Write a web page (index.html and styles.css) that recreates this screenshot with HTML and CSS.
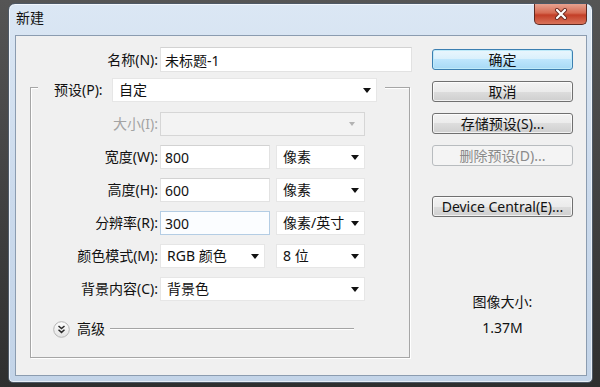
FILE: index.html
```html
<!DOCTYPE html>
<html lang="zh-CN">
<head>
    <meta charset="UTF-8">
    <title>新建</title>
    <link rel="stylesheet" href="styles.css">
</head>
<body>
<div class="window">
    <div class="titlebar">
        <span class="title">新建</span>
        <div class="close">
            <svg width="14" height="12" viewBox="0 0 14 12">
                <path d="M3 2 L11 10 M11 2 L3 10" stroke="#6b2b22" stroke-width="4" stroke-linecap="round"/>
                <path d="M3 2 L11 10 M11 2 L3 10" stroke="#fff" stroke-width="2.2" stroke-linecap="round"/>
            </svg>
        </div>
    </div>
    <div class="client">
        <div class="main">
            <div class="name-row">
                <label>名称(N):</label>
                <input class="field name-field" type="text" value="未标题-1">
            </div>
            <fieldset class="group">
                <legend>
                    <div class="preset">
                        <label>预设(P):</label>
                        <div class="select preset-select">自定<span class="arrow"></span></div>
                    </div>
                </legend>
                <div class="row disabled">
                    <label>大小(I):</label>
                    <div class="select select-off w-size"><span></span><span class="arrow"></span></div>
                </div>
                <div class="row">
                    <label>宽度(W):</label>
                    <input class="field w-num" type="text" value="800">
                    <div class="select w-unit">像素<span class="arrow"></span></div>
                </div>
                <div class="row">
                    <label>高度(H):</label>
                    <input class="field w-num" type="text" value="600">
                    <div class="select w-unit">像素<span class="arrow"></span></div>
                </div>
                <div class="row">
                    <label>分辨率(R):</label>
                    <input class="field w-num focus" type="text" value="300">
                    <div class="select w-unit">像素/英寸<span class="arrow"></span></div>
                </div>
                <div class="row">
                    <label>颜色模式(M):</label>
                    <div class="select w-mode">RGB 颜色<span class="arrow"></span></div>
                    <div class="select w-unit w-bits">8 位<span class="arrow"></span></div>
                </div>
                <div class="row">
                    <label>背景内容(C):</label>
                    <div class="select w-size">背景色<span class="arrow"></span></div>
                </div>
                <div class="advanced">
                    <svg class="chevron" width="17" height="17" viewBox="0 0 17 17">
                        <defs>
                            <linearGradient id="cg" x1="0" y1="0" x2="0" y2="1">
                                <stop offset="0" stop-color="#fdfdfd"/>
                                <stop offset="1" stop-color="#e2e2e2"/>
                            </linearGradient>
                        </defs>
                        <circle cx="8.5" cy="8.5" r="7.8" fill="url(#cg)" stroke="#b5b5b5"/>
                        <path d="M5.5 5 L8.5 7.6 L11.5 5 M5.5 8.8 L8.5 11.4 L11.5 8.8" fill="none" stroke="#2a2a2a" stroke-width="1.5"/>
                    </svg>
                    <span class="adv-text">高级</span>
                    <span class="adv-line"></span>
                </div>
            </fieldset>
        </div>
        <div class="side">
            <button class="btn btn-default">确定</button>
            <button class="btn">取消</button>
            <button class="btn">存储预设(S)...</button>
            <button class="btn" disabled>删除预设(D)...</button>
            <button class="btn btn-device">Device Central(E)...</button>
            <div class="info">
                <div>图像大小:</div>
                <div class="info-size">1.37M</div>
            </div>
        </div>
    </div>
</div>
</body>
</html>
```

FILE: styles.css
```css
body {
    margin: 0;
    width: 600px;
    height: 387px;
    overflow: hidden;
    background: linear-gradient(#555555, #2f2f2f);
    font-family: "Noto Sans", "Noto Sans CJK SC", sans-serif;
    font-size: 14px;
    color: #111;
}
.window {
    box-sizing: border-box;
    width: 585px;
    height: 380px;
    margin: 3px 0 0 8px;
    padding: 0 5px 6px 6px;
    border: 1px solid #4e5966;
    border-radius: 7px 7px 5px 5px;
    background: linear-gradient(#dbe7f4, #cbdaec 50%, #c3d4e8);
    box-shadow: inset 0 0 0 1px rgba(255, 255, 255, 0.6);
}
.titlebar {
    display: flex;
    height: 31px;
}
.title {
    margin: 6px 0 0 1px;
    line-height: 16px;
}
.close {
    box-sizing: border-box;
    display: flex;
    align-items: center;
    justify-content: center;
    width: 53px;
    height: 21px;
    margin-left: auto;
    border: 1px solid #5e2a22;
    border-top: none;
    border-radius: 0 0 5px 5px;
    background: linear-gradient(#e6a290 0%, #d66a52 45%, #c33e27 55%, #d9735a 100%);
}
.client {
    box-sizing: border-box;
    display: flex;
    height: 341px;
    padding-left: 14px;
    border: 1px solid #8b9cb0;
    background: #f0f0f0;
}
.main {
    width: 382px;
}
label {
    line-height: 20px;
    white-space: nowrap;
}
.name-row {
    display: flex;
    align-items: center;
    margin-top: 11px;
}
.name-row label {
    width: 128px;
    margin-right: 2px;
    text-align: right;
}
.field {
    box-sizing: border-box;
    height: 24px;
    margin: 0;
    padding: 0 4px;
    border: 1px solid #e2e2e2;
    border-top-color: #d2d2d2;
    background: #fff;
    font-family: inherit;
    font-size: 14px;
    color: #111;
    outline: none;
}
.name-field {
    width: 252px;
    height: 25px;
}
.field.focus {
    border-color: #b4cde4;
    background: #fbfdff;
}
.group {
    box-sizing: border-box;
    width: 380px;
    min-width: 0;
    margin: 6px 0 0;
    padding: 16px 0 18px;
    border: 1px solid #a6a6a6;
    box-shadow: inset 1px 1px 0 #fff, 1px 1px 0 #fff;
}
.group legend {
    width: 347px;
    margin-left: 7px;
    padding: 0;
    background: #f0f0f0;
}
.preset {
    display: flex;
    align-items: flex-start;
    height: 18px;
    padding: 0 8px 0 16px;
}
.preset label {
    width: 56px;
    margin-right: 2px;
    line-height: 24px;
}
.select {
    box-sizing: border-box;
    display: flex;
    align-items: center;
    justify-content: space-between;
    height: 24px;
    padding: 0 5px 0 6px;
    border: 1px solid #e6e6e6;
    background: #fff;
    line-height: 20px;
    white-space: nowrap;
}
.preset-select {
    width: 265px;
    flex-shrink: 0;
}
.arrow {
    width: 0;
    height: 0;
    border-left: 4px solid transparent;
    border-right: 4px solid transparent;
    border-top: 5px solid #111;
}
.row {
    display: flex;
    align-items: center;
    height: 24px;
    margin-bottom: 9px;
}
.row label {
    width: 127px;
    margin-right: 2px;
    text-align: right;
}
.row.disabled label {
    color: #a3a3a3;
}
.select-off {
    border-color: #d6d6d6;
    background: #f3f3f3;
}
.select-off .arrow {
    border-left-width: 3px;
    border-right-width: 3px;
    border-top: 4px solid #b3b3b3;
    margin-right: 4px;
}
.w-size {
    width: 205px;
}
.w-num {
    width: 110px;
}
.w-unit {
    width: 89px;
    margin-left: 6px;
}
.w-mode {
    width: 105px;
}
.w-bits {
    margin-left: 11px;
}
.advanced {
    display: flex;
    align-items: center;
    height: 20px;
    margin-top: 18px;
    padding-left: 22px;
}
.adv-text {
    margin-left: 7px;
    line-height: 20px;
}
.adv-line {
    width: 244px;
    height: 0;
    margin-left: 5px;
    border-top: 1px solid #a4a4a4;
    border-bottom: 1px solid #fff;
}
.side {
    display: flex;
    flex-direction: column;
    width: 141px;
    margin-left: 20px;
    padding-top: 13px;
}
.btn {
    box-sizing: border-box;
    height: 21px;
    margin: 0 0 11px;
    padding: 0;
    border: 1px solid #707070;
    border-radius: 3px;
    background: linear-gradient(#f3f3f3 0%, #ebebeb 50%, #dddddd 50%, #cfcfcf 100%);
    font-family: inherit;
    font-size: 14px;
    line-height: 18px;
    color: #111;
    box-shadow: inset 0 0 0 1px rgba(255, 255, 255, 0.7);
}
.btn-default {
    border-color: #3c7fb1;
    background: linear-gradient(#eaf6fd 0%, #d9f0fc 50%, #bee6fd 50%, #a7d9f5 100%);
    box-shadow: inset 0 0 0 1px #bfeaf9;
}
.btn:disabled {
    border-color: #b8bcbf;
    background: #f4f4f4;
    color: #8a8a8a;
    box-shadow: none;
}
.btn-device {
    margin-top: 19px;
}
.info {
    margin-top: 64px;
    text-align: center;
    line-height: 20px;
}
.info-size {
    margin-top: 6px;
}
```
